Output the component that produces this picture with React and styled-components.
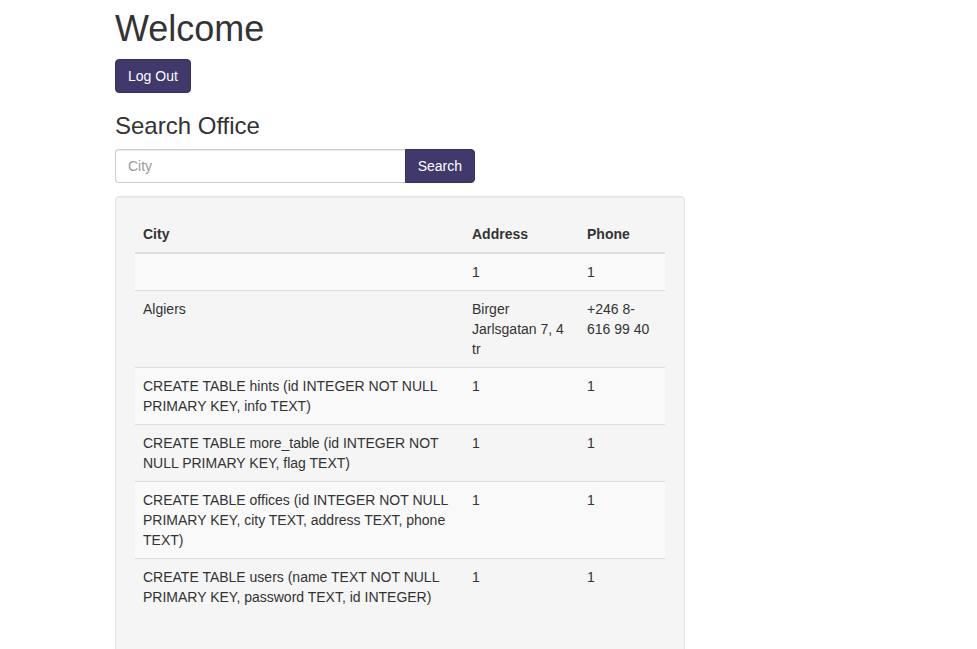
import React from 'react';
import styled, { createGlobalStyle } from 'styled-components';

const GlobalStyle = createGlobalStyle`
  * {
    box-sizing: border-box;
  }
  body {
    margin: 0;
    font-family: "Liberation Sans", Arial, Helvetica, sans-serif;
    font-size: 14px;
    line-height: 20px;
    color: #333;
    background: #fff;
  }
`;

const Page = styled.div`
  padding-left: 115px;
`;

const Title = styled.h1`
  margin: 9px 0 10px;
  font-size: 36px;
  font-weight: 500;
  line-height: 1.1;
`;

const Button = styled.button`
  height: 34px;
  padding: 6px 12px;
  font-family: inherit;
  font-size: 14px;
  line-height: 20px;
  color: #fff;
  background: #41386b;
  border: 1px solid #392f60;
  border-radius: ${(p) => (p.$attached ? '0 4px 4px 0' : '4px')};
  cursor: pointer;
`;

const SubTitle = styled.h3`
  margin: 20px 0 10px;
  font-size: 24px;
  font-weight: 500;
  line-height: 1.1;
`;

const SearchForm = styled.form`
  display: flex;
  width: 360px;
  margin: 0;
`;

const Input = styled.input`
  flex: 1;
  height: 34px;
  padding: 6px 12px;
  font-family: inherit;
  font-size: 14px;
  line-height: 20px;
  color: #555;
  border: 1px solid #ccc;
  border-right: none;
  border-radius: 4px 0 0 4px;
  box-shadow: inset 0 1px 1px rgba(0, 0, 0, 0.075);
  outline: none;

  &::placeholder {
    color: #999;
  }
`;

const Well = styled.div`
  width: 570px;
  margin-top: 13px;
  padding: 19px;
  background: #f5f5f5;
  border: 1px solid #e3e3e3;
  border-radius: 4px;
  box-shadow: inset 0 1px 1px rgba(0, 0, 0, 0.05);
`;

const Table = styled.table`
  width: 100%;
  margin-bottom: 20px;
  border-collapse: collapse;
  border-spacing: 0;
  table-layout: fixed;
`;

const Th = styled.th`
  padding: 8px;
  text-align: left;
  vertical-align: bottom;
  font-weight: bold;
  line-height: 20px;
  border-bottom: 2px solid #ddd;
`;

const Row = styled.tr`
  &:nth-of-type(odd) {
    background: #f9f9f9;
  }
`;

const Td = styled.td`
  padding: 8px;
  vertical-align: top;
  line-height: 20px;
  border-top: 1px solid #ddd;
`;

const rows = [
  { city: '', address: '1', phone: '1' },
  { city: 'Algiers', address: 'Birger Jarlsgatan 7, 4 tr', phone: '+246 8-616 99 40' },
  { city: 'CREATE TABLE hints (id INTEGER NOT NULL PRIMARY KEY, info TEXT)', address: '1', phone: '1' },
  { city: 'CREATE TABLE more_table (id INTEGER NOT NULL PRIMARY KEY, flag TEXT)', address: '1', phone: '1' },
  {
    city: 'CREATE TABLE offices (id INTEGER NOT NULL PRIMARY KEY, city TEXT, address TEXT, phone TEXT)',
    address: '1',
    phone: '1',
  },
  { city: 'CREATE TABLE users (name TEXT NOT NULL PRIMARY KEY, password TEXT, id INTEGER)', address: '1', phone: '1' },
];

export default function App() {
  return (
    <>
      <GlobalStyle />
      <Page>
        <Title>Welcome</Title>
        <Button type="button">Log Out</Button>
        <SubTitle>Search Office</SubTitle>
        <SearchForm onSubmit={(e) => e.preventDefault()}>
          <Input type="text" placeholder="City" />
          <Button type="submit" $attached>
            Search
          </Button>
        </SearchForm>
        <Well>
          <Table>
            <colgroup>
              <col style={{ width: 329 }} />
              <col style={{ width: 115 }} />
              <col style={{ width: 86 }} />
            </colgroup>
            <thead>
              <tr>
                <Th>City</Th>
                <Th>Address</Th>
                <Th>Phone</Th>
              </tr>
            </thead>
            <tbody>
              {rows.map((r, i) => (
                <Row key={i}>
                  <Td>{r.city}</Td>
                  <Td>{r.address}</Td>
                  <Td>{r.phone}</Td>
                </Row>
              ))}
            </tbody>
          </Table>
        </Well>
      </Page>
    </>
  );
}
